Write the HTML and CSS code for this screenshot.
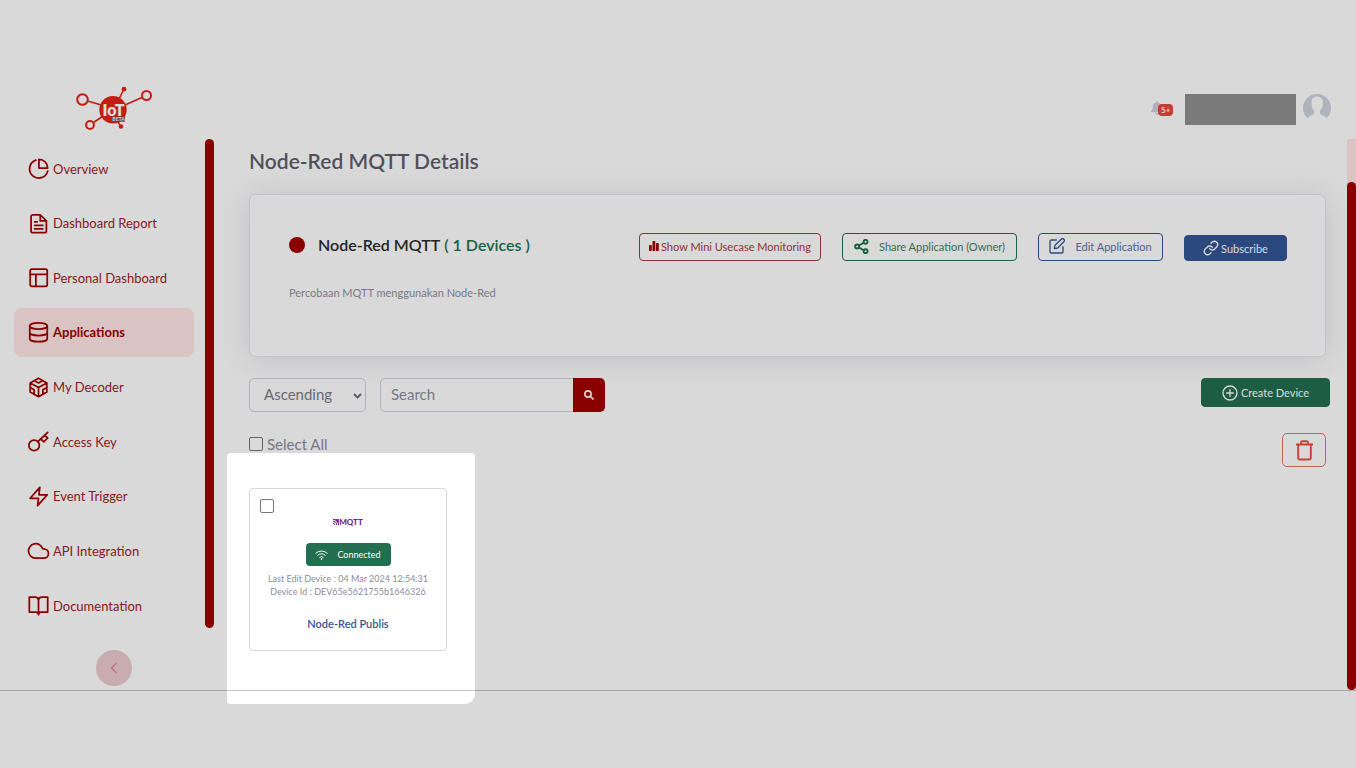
FILE: index.html
```html
<!DOCTYPE html>
<html lang="en">
<head>
<meta charset="utf-8">
<title>Node-Red MQTT Details</title>
<link rel="stylesheet" href="styles.css">
</head>
<body>
<header class="topbar">
  <a class="logo" href="#" aria-label="IoT Beta">
    <svg width="78" height="46" viewBox="0 0 78 46" fill="none" stroke="#e62315" stroke-width="1.600">
      <path d="M12.500 15L28 19.500M18.500 36.500l9-6M50 19l17.500-7.700M44 13l4-8M43 36l2 3"/>
      <g stroke-width="2"><circle cx="7.500" cy="13.500" r="5.300"/><circle cx="71.500" cy="9.500" r="4.500"/><circle cx="15" cy="39" r="3.900"/></g>
      <circle cx="49" cy="3.200" r="1.600" fill="#e62315"/><circle cx="46" cy="40.500" r="1.500" fill="#e62315"/>
      <circle cx="38" cy="23.700" r="13.700" fill="#e62315" stroke="none"/>
      <text x="38.500" y="29.500" class="logo-name">IoT</text>
      <rect x="37" y="30.700" width="13" height="5" fill="#555" stroke="none"/>
      <text x="43.500" y="35.200" class="logo-tag">BETA</text>
    </svg>
  </a>
  <div class="account">
    <button class="bell" aria-label="Notifications">
      <svg width="12" height="14" viewBox="0 0 448 512" fill="#ccd0dd"><path d="M224 512c35 0 64-29 64-64H160c0 35 29 64 64 64zm215-149c-19-21-55-52-55-155 0-78-54-140-128-155V32a32 32 0 1 0-64 0v21C118 68 64 130 64 208c0 103-36 134-55 155-6 6-9 14-9 21 0 16 13 32 32 32h384c19 0 32-16 32-32 0-7-3-15-9-21z"/></svg>
      <span class="count">5+</span>
    </button>
    <span class="username"></span>
    <svg class="avatar" width="28" height="28" viewBox="0 0 28 28"><path fill="#ced3dc" d="M4.500 24.300A14 14 0 1 1 23.500 24.300C21.500 21.500 18 21 17 19.500V16.500C19.500 14.500 20 11.500 20 8.500 20 4.500 17.500 2.500 14 2.500S8.500 4.500 8.500 8.500C8.500 11.500 9 14.500 11 16.500V19.500C10 21 6.500 21.500 4.500 24.300z"/></svg>
  </div>
</header>
<div class="body">
  <aside class="sidebar">
    <nav class="menu">
      <a href="#"><svg class="ic" viewBox="0 0 24 24"><path d="M9 2.500A10.500 10.500 0 1 0 22.500 15"/><path d="M12.500 1.500V11.500H22.500A10 10 0 0 0 12.500 1.500z"/></svg>Overview</a>
      <a href="#"><svg class="ic" viewBox="0 0 24 24"><path d="M14 2H5.500A2 2 0 0 0 3.500 4V20.500a2 2 0 0 0 2 2H19a2 2 0 0 0 2-2V9zM14 2V9H21M7.500 10h3M7.500 14h9.500M7.500 18h9.500"/></svg>Dashboard Report</a>
      <a href="#"><svg class="ic" viewBox="0 0 24 24"><rect x="2.500" y="2.500" width="19.500" height="19.500" rx="2"/><path d="M2.500 8.500H22M9 8.500V22"/></svg>Personal Dashboard</a>
      <a href="#" class="active"><svg class="ic" viewBox="0 0 24 24"><ellipse cx="12" cy="4.500" rx="10" ry="3.500"/><path d="M2 4.500V19c0 2 4.500 3.500 10 3.500S22 21 22 19V4.500M2 12c0 2 4.500 3.500 10 3.500S22 14 22 12"/></svg>Applications</a>
      <a href="#"><svg class="ic" viewBox="0 0 24 24"><path d="M12 1.500l9.500 5.300v10.400L12 22.500l-9.500-5.300V6.800zM7.500 4.200L12 6.800l4.500-2.600M2.500 6.800L12 12l9.500-5.200M12 12v10.500M2.500 12L7 14.500v5.200M21.500 12L17 14.500v5.200"/></svg>My Decoder</a>
      <a href="#"><svg class="ic" viewBox="0 0 24 24"><circle cx="7" cy="16.500" r="6"/><path d="M11.500 12L22.500 1.500M14.500 9l3.500 3.500L22.500 8 19 5"/></svg>Access Key</a>
      <a href="#"><svg class="ic" viewBox="0 0 24 24"><path d="M13.500 1.500L2.500 14H12L11 22.500 22 10H12.500z"/></svg>Event Trigger</a>
      <a href="#"><svg class="ic" viewBox="0 0 24 24"><path d="M18 10h-1.200A8.300 8.300 0 1 0 8.500 20.800H18a5.400 5.400 0 0 0 0-10.800z"/></svg>API Integration</a>
      <a href="#"><svg class="ic" viewBox="0 0 24 24"><path d="M1.500 2.500H8a4 4 0 0 1 4 3v17a3 3 0 0 0-3-3H1.500zM22.500 2.500H16a4 4 0 0 0-4 3v17a3 3 0 0 1 3-3h7.500z"/></svg>Documentation</a>
    </nav>
    <div class="side-track"><div class="side-thumb"></div></div>
    <button class="collapse" aria-label="Collapse menu"><svg width="8" height="12" viewBox="0 0 8 12" fill="none" stroke="#dc8f92" stroke-width="1.500"><path d="M6.500 1L1.500 6l5 5"/></svg></button>
  </aside>
  <main class="content">
    <h1>Node-Red MQTT Details</h1>
    <section class="summary">
      <div class="summary-row">
        <h2><span class="dot"></span>Node-Red MQTT <em>( 1 Devices )</em></h2>
        <div class="actions">
          <button class="btn red"><svg width="10" height="10" viewBox="0 0 10 10"><rect y="4" width="2.800" height="6" rx=".8"/><rect x="3.500" width="2.800" height="10" rx=".8"/><rect x="7" y="2" width="2.800" height="8" rx=".8"/></svg>Show Mini Usecase Monitoring</button>
          <button class="btn green"><svg width="15" height="15" viewBox="0 0 24 24"><circle cx="18.500" cy="4.500" r="3.200"/><circle cx="5" cy="12" r="3.200"/><circle cx="18.500" cy="19.500" r="3.200"/><path d="M8 10.500l7.500-4.500M8 13.500l7.500 4.500"/></svg>Share Application (Owner)</button>
          <button class="btn blue"><svg width="16" height="16" viewBox="0 0 24 24"><path d="M11 3H3.500A2 2 0 0 0 1.500 5V20.500a2 2 0 0 0 2 2H19a2 2 0 0 0 2-2V13M8 16l1-5 9.500-9.200a2.500 2.500 0 0 1 3.700 3.700L13 15z"/></svg>Edit Application</button>
          <button class="btn solid-blue"><svg width="16" height="16" viewBox="0 0 24 24"><path d="M10 13a5 5 0 0 0 7.500.5l3.500-3.500a5 5 0 0 0-7-7l-2 2M14 11a5 5 0 0 0-7.500-.5L3 14a5 5 0 0 0 7 7l2-2"/></svg>Subscribe</button>
        </div>
      </div>
      <p>Percobaan MQTT menggunakan Node-Red</p>
    </section>
    <div class="toolbar">
      <div class="sort">
        <select aria-label="Sort order"><option>Ascending</option><option>Descending</option></select>
        <svg class="chev" width="9" height="6" viewBox="0 0 9 6" fill="none" stroke="#6b6b78" stroke-width="1.800"><path d="M1 1l3.500 3.500L8 1"/></svg>
      </div>
      <form class="search">
        <input type="text" placeholder="Search" aria-label="Search">
        <button type="button" aria-label="Search"><svg width="10" height="10" viewBox="0 0 10 10" fill="none" stroke="#fff" stroke-width="1.600"><circle cx="4" cy="4" r="3.100"/><path d="M6.300 6.300L9.500 9.500"/></svg></button>
      </form>
      <button class="btn create"><svg width="16" height="16" viewBox="0 0 24 24"><circle cx="12" cy="12" r="10.500"/><path d="M12 7v10M7 12h10"/></svg>Create Device</button>
    </div>
    <div class="bulk">
      <label><input type="checkbox">Select All</label>
      <button class="trash" aria-label="Delete"><svg width="19" height="21" viewBox="0 0 19 21" fill="none" stroke="#ee4b3e" stroke-width="1.900"><path d="M1 4.500h17M3.200 4.500V18a1.500 1.500 0 0 0 1.500 1.500h9.600a1.500 1.500 0 0 0 1.500-1.500V4.500M6 4.500V2.500a1.300 1.300 0 0 1 1.300-1.300h4.400A1.300 1.300 0 0 1 13 2.500v2"/></svg></button>
    </div>
    <div class="devices">
      <article class="device">
        <input type="checkbox" aria-label="Select Node-Red Publis">
        <div class="mqtt"><svg width="6" height="6" viewBox="0 0 14 14" fill="none" stroke="#732281" stroke-width="2.400"><path d="M0 10a4 4 0 0 1 4 4M0 5.500a8.500 8.500 0 0 1 8.500 8.500M0 1a13 13 0 0 1 13 13M6 0c4 1.500 6.500 4 8 8M11 0l3 3"/></svg>MQTT</div>
        <span class="status"><svg width="13" height="10" viewBox="0 0 26 20" fill="none" stroke="#fff" stroke-width="2"><path d="M1 7a17 17 0 0 1 24 0M5 11a11 11 0 0 1 16 0M9 15a6 6 0 0 1 8 0"/><circle cx="13" cy="18" r="1" fill="#fff"/></svg>Connected</span>
        <p>Last Edit Device : 04 Mar 2024 12:54:31<br>Device Id : DEV65e5621755b1646326</p>
        <a href="#">Node-Red Publis</a>
      </article>
      <div class="spotlight"></div>
    </div>
  </main>
  <div class="page-track"><div class="page-thumb"></div></div>
</div>
</body>
</html>
```
FILE: styles.css
```css
* { box-sizing: border-box; }
body {
  margin: 0;
  min-height: 100vh;
  padding: 78px 0 77px;
  display: flex;
  flex-direction: column;
  background: #fff;
  color: #8c8c9b;
  font-family: Lato, "Open Sans", sans-serif;
  font-size: 12px;
}
button, input, select { font: inherit; }
button { cursor: pointer; }
a { text-decoration: none; }
h1, h2, p { margin: 0; }

.topbar {
  height: 61px;
  padding: 8px 25px 8px 75px;
  display: flex;
  justify-content: space-between;
}
.logo { display: block; }
.logo-name { fill: #fff; stroke: none; font: 800 16px Lato, sans-serif; text-anchor: middle; }
.logo-tag { fill: #fff; stroke: none; font: 700 5px Lato, sans-serif; text-anchor: middle; }
.account { display: flex; align-items: flex-start; padding-top: 8px; }
.bell {
  position: relative;
  width: 22px;
  height: 28px;
  margin-right: 12px;
  padding: 0;
  border: 0;
  background: none;
}
.bell svg { display: block; }
.count {
  position: absolute;
  left: 7px;
  top: 10px;
  padding: 0 3px;
  border-radius: 4px;
  background: #e74a3b;
  color: #fff;
  font-size: 8px;
  line-height: 12px;
  font-weight: 700;
}
.username { width: 111px; height: 31px; margin-right: 7px; background: #909090; }

.body { flex: 1; display: flex; border-bottom: 1px solid #c4c4c4; }
.sidebar {
  width: 214px;
  flex: none;
  display: grid;
  grid-template-columns: 1fr 9px;
  grid-template-rows: 1fr 60px;
}
.menu {
  padding: 5px 11px 0 14px;
  display: flex;
  flex-direction: column;
  justify-content: space-between;
}
.menu a {
  height: 49px;
  padding-left: 14px;
  display: flex;
  align-items: center;
  gap: 4px;
  border-radius: 8px;
  color: #9f2226;
  font-size: 13px;
}
.menu .active { background: #ffe5e5; color: #a30000; font-weight: 700; }
.ic {
  width: 21px;
  height: 21px;
  fill: none;
  stroke: #a30000;
  stroke-width: 2;
  stroke-linejoin: round;
  stroke-linecap: round;
  overflow: visible;
}
.side-track { padding-bottom: 2px; }
.side-thumb { height: 100%; border-radius: 5px; background: #a30000; }
.collapse {
  width: 36px;
  height: 36px;
  margin: 20px 0 0 96px;
  padding: 0;
  border: 0;
  border-radius: 50%;
  background: #edcbcc;
  display: grid;
  place-items: center;
}

.content { flex: 1; padding: 9px 21px 0 35px; }
h1 { font-size: 21px; line-height: 26px; font-weight: 600; color: #5f5f6e; }
.summary {
  height: 163px;
  margin-top: 20px;
  padding: 38px 38px 38px 39px;
  border: 1px solid #e3e6f0;
  border-radius: 6px;
  background: #fff;
  box-shadow: 0 2px 28px rgba(58, 59, 69, .15);
}
.summary-row { display: flex; justify-content: space-between; align-items: flex-start; height: 28px; }
h2 { display: flex; align-items: center; font-size: 16px; line-height: 24px; font-weight: 600; color: #2b2b2b; }
h2 em { margin-left: 4px; font-style: normal; color: #1f704f; }
.dot { width: 16px; height: 16px; margin-right: 13px; border-radius: 50%; background: #a30000; }
.actions { display: flex; gap: 21px; align-items: flex-end; }
.btn {
  height: 28px;
  padding: 0 8px 2px;
  display: flex;
  align-items: center;
  justify-content: center;
  border: 1px solid;
  border-radius: 4px;
  background: #fff;
  font-size: 11px;
  white-space: nowrap;
}
.btn svg { flex: none; fill: none; stroke: currentColor; stroke-width: 2; stroke-linejoin: round; stroke-linecap: round; }
.btn.red { width: 182px; gap: 2px; color: #a8393d; }
.btn.red svg { fill: #a30000; stroke: none; }
.btn.green { width: 175px; gap: 10px; color: #3f8066; border-color: #1f704f; }
.btn.green svg { stroke: #1f704f; stroke-width: 3; }
.btn.blue { width: 125px; gap: 10px; color: #5a74a5; border-color: #335696; }
.btn.blue svg { stroke: #335696; }
.btn.solid-blue { width: 103px; height: 26px; padding-bottom: 0; gap: 2px; color: #fff; background: #335696; border-color: #335696; }
.summary p { margin-top: 24px; font-size: 11px; line-height: 16px; color: #8f8f9e; }

.toolbar { margin-top: 21px; display: flex; align-items: flex-start; }
.sort { position: relative; }
.sort select {
  appearance: none;
  width: 117px;
  height: 34px;
  padding: 0 14px 2px;
  border: 1px solid #d1d3e2;
  border-radius: 5px;
  background: transparent;
  color: #7b7b8a;
  font-size: 15px;
}
.chev { position: absolute; right: 4px; top: 15px; }
.search { display: flex; margin-left: 14px; }
.search input {
  width: 193px;
  height: 34px;
  padding: 0 10px 2px;
  border: 1px solid #d1d3e2;
  border-right: 0;
  border-radius: 5px 0 0 5px;
  background: transparent;
  font-size: 15px;
}
.search input::placeholder { color: #8c8c9b; }
.search button {
  width: 32px;
  padding: 0;
  border: 0;
  border-radius: 0 5px 5px 0;
  background: #a30000;
}
.create {
  width: 129px;
  height: 29px;
  margin: 0 -4px 0 auto;
  padding-bottom: 0;
  gap: 3px;
  border-color: #216e50;
  background: #216e50;
  color: #fff;
}
.bulk { margin-top: 21px; height: 34px; display: flex; justify-content: space-between; align-items: flex-start; }
.bulk label { display: flex; align-items: center; height: 22px; gap: 4px; font-size: 15px; }
input[type="checkbox"] {
  appearance: none;
  width: 14px;
  height: 14px;
  margin: 0;
  border: 1px solid #767676;
  border-radius: 2px;
  background: #fff;
}
.trash {
  width: 44px;
  height: 34px;
  padding: 0;
  border: 1px solid #ee7268;
  border-radius: 5px;
  background: #fff;
  display: grid;
  place-items: center;
}
.devices { position: relative; width: 198px; margin-top: 21px; }
.device {
  height: 163px;
  padding: 10px;
  border: 1px solid #d8d8dc;
  border-radius: 4px;
  display: flex;
  flex-direction: column;
  align-items: center;
}
.device input { align-self: flex-start; flex: none; }
.mqtt {
  margin-top: 4px;
  display: flex;
  align-items: center;
  color: #732281;
  font-size: 8px;
  line-height: 10px;
  font-weight: 900;
}
.status {
  flex: none;
  width: 85px;
  height: 23px;
  margin-top: 16px;
  display: flex;
  align-items: center;
  justify-content: center;
  gap: 9px;
  border-radius: 4px;
  background: #216e50;
  color: #fff;
  font-size: 9px;
}
.device p { margin-top: 6px; font-size: 9px; line-height: 13px; text-align: center; white-space: nowrap; }
.device a { margin-top: 19px; font-size: 11px; line-height: 14px; font-weight: 600; color: #335696; }
/* Tour highlight: dims everything around the device card */
.spotlight {
  position: absolute;
  z-index: 10;
  inset: -35px -28px -53px -22px;
  border-radius: 4px 4px 10px 4px;
  box-shadow: 0 0 0 3000px rgba(0, 0, 0, .15);
  pointer-events: none;
}
.page-track { width: 9px; padding-top: 43px; background: #ffe5e5; }
.page-thumb { height: 100%; border-radius: 5px; background: #a30000; }
```
